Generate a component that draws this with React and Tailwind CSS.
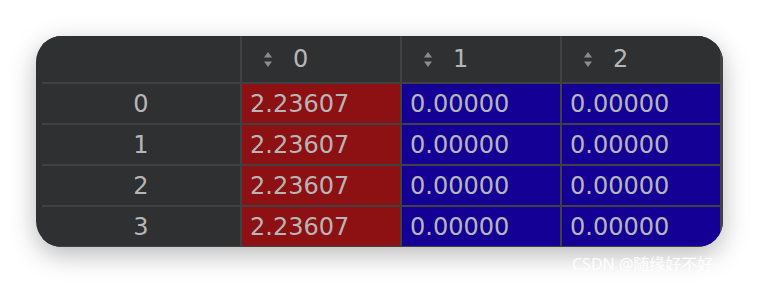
import React from "react";

const columns = ["0", "1", "2"];
const rows = [
  { index: 0, values: ["2.23607", "0.00000", "0.00000"] },
  { index: 1, values: ["2.23607", "0.00000", "0.00000"] },
  { index: 2, values: ["2.23607", "0.00000", "0.00000"] },
  { index: 3, values: ["2.23607", "0.00000", "0.00000"] },
];

function SortIcon() {
  return (
    <svg width="8" height="15" viewBox="0 0 8 15" className="shrink-0">
      <path d="M4 0 L8 5.5 L0 5.5 Z" fill="#8c8c8c" />
      <path d="M4 15 L8 9.5 L0 9.5 Z" fill="#8c8c8c" />
    </svg>
  );
}

export default function App() {
  const font = { fontFamily: '"DejaVu Sans", "Noto Sans", sans-serif' };

  return (
    <div className="relative w-[760px] h-[284px] bg-white overflow-hidden">
      <div className="pt-[36px] pl-[36px]">
        <div
          className="w-[687px] h-[211px] rounded-[26px] overflow-hidden bg-[#2f3032] pl-[6px] shadow-[0_8px_26px_rgba(0,0,0,0.28)]"
          style={font}
        >
          <div className="grid grid-cols-[198px_158px_158px_158px] grid-rows-[46px_39px_39px_39px_39px] gap-[2px] bg-[#414143] pr-[3px] pb-[1px] text-[24px] leading-none text-[#b6b6b6]">
            {/* header row */}
            <div className="bg-[#2f3032]" />
            {columns.map((c) => (
              <div key={c} className="bg-[#2f3032] flex items-center pl-[22px] gap-[21px]">
                <SortIcon />
                <span>{c}</span>
              </div>
            ))}

            {/* body rows */}
            {rows.map((row) => (
              <React.Fragment key={row.index}>
                <div className="bg-[#2f3032] flex items-center justify-center">{row.index}</div>
                {row.values.map((v, i) => (
                  <div
                    key={i}
                    className={`flex items-center pl-[8px] ${i === 0 ? "bg-[#8d1013]" : "bg-[#150096]"}`}
                  >
                    {v}
                  </div>
                ))}
              </React.Fragment>
            ))}
          </div>
        </div>
      </div>

      <div
        className="absolute left-[572px] top-[252px] text-[16px] text-white/90 whitespace-nowrap"
        style={{ fontFamily: '"Noto Sans", "Noto Sans CJK SC", sans-serif' }}
      >
        CSDN @随缘好不好
      </div>
    </div>
  );
}
